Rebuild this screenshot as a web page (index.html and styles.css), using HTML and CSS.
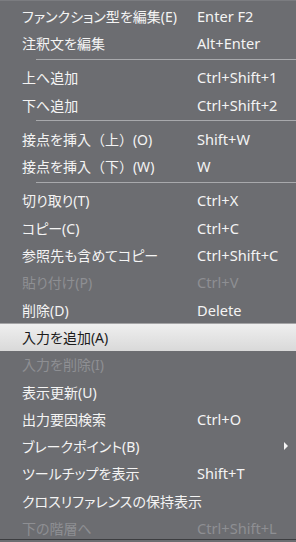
FILE: index.html
```html
<!DOCTYPE html>
<html lang="ja">
<head>
  <meta charset="UTF-8">
  <meta name="viewport" content="width=device-width, initial-scale=1.0">
  <title>Context Menu</title>
  <link rel="stylesheet" href="styles.css">
</head>
<body>
  <div class="menu">
    <div class="item"><span class="label">ファンクション型を編集(E)</span><span class="key">Enter F2</span></div>
    <div class="item"><span class="label">注釈文を編集</span><span class="key">Alt+Enter</span></div>
    <div class="separator"></div>
    <div class="item"><span class="label">上へ追加</span><span class="key">Ctrl+Shift+1</span></div>
    <div class="item"><span class="label">下へ追加</span><span class="key">Ctrl+Shift+2</span></div>
    <div class="separator"></div>
    <div class="item"><span class="label">接点を挿入<span class="wide">（上）</span>(O)</span><span class="key">Shift+W</span></div>
    <div class="item"><span class="label">接点を挿入<span class="wide">（下）</span>(W)</span><span class="key">W</span></div>
    <div class="separator"></div>
    <div class="item"><span class="label">切り取り(T)</span><span class="key">Ctrl+X</span></div>
    <div class="item"><span class="label">コピー(C)</span><span class="key">Ctrl+C</span></div>
    <div class="item"><span class="label">参照先も含めてコピー</span><span class="key">Ctrl+Shift+C</span></div>
    <div class="item disabled"><span class="label">貼り付け(P)</span><span class="key">Ctrl+V</span></div>
    <div class="item"><span class="label">削除(D)</span><span class="key">Delete</span></div>
    <div class="item active"><span class="label">入力を追加(A)</span><span class="key"></span></div>
    <div class="item disabled"><span class="label">入力を削除(I)</span><span class="key"></span></div>
    <div class="item"><span class="label">表示更新(U)</span><span class="key"></span></div>
    <div class="item"><span class="label">出力要因検索</span><span class="key">Ctrl+O</span></div>
    <div class="item submenu"><span class="label">ブレークポイント(B)</span><span class="key"></span></div>
    <div class="item"><span class="label">ツールチップを表示</span><span class="key">Shift+T</span></div>
    <div class="item"><span class="label">クロスリファレンスの保持表示</span><span class="key"></span></div>
    <div class="item disabled"><span class="label">下の階層へ</span><span class="key">Ctrl+Shift+L</span></div>
  </div>
</body>
</html>
```

FILE: styles.css
```css
body {
  margin: 0;
  background: #6c6d71;
  font-family: "Noto Sans", "Noto Sans CJK JP", sans-serif;
  font-feature-settings: "palt";
}

.menu {
  width: 296px;
  height: 540px;
  box-sizing: border-box;
  padding-top: 1px;
  background-color: #6c6d71;
  border-top: 1px solid #7b7c80;
  border-bottom: 1px solid #3c3d40;
  overflow: hidden;
}

.item {
  position: relative;
  display: flex;
  align-items: center;
  height: 27.3px;
  padding-left: 22px;
  font-size: 14px;
  color: #f4f4f4;
  white-space: nowrap;
}

.label {
  width: 175px;
}

.wide {
  font-feature-settings: normal;
}

.key {
  flex: 1;
  font-size: 14.6px;
}

.disabled {
  color: #8e8f93;
}

.active {
  color: #1c1c1c;
  background: linear-gradient(#efefef, #d9d9d9);
  border-top: 1px solid #a4a4a6;
  box-sizing: border-box;
}

/* submenu arrow */
.submenu::after {
  content: "";
  position: absolute;
  right: 8px;
  top: 50%;
  margin-top: -4px;
  border-left: 4px solid #f4f4f4;
  border-top: 4px solid transparent;
  border-bottom: 4px solid transparent;
}

.separator {
  height: 1px;
  margin: 2px 0 4px 36px;
  background-color: #a8a9ac;
}
```
